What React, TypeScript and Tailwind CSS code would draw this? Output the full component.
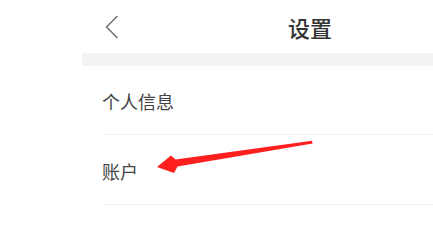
import React from "react";

const font = { fontFamily: '"Noto Sans CJK SC", "Noto Sans", sans-serif' };

function Row({ label, tall }: { label: string; tall?: boolean }) {
  return (
    <div className={`${tall ? "h-[70px]" : "h-[69px]"} flex items-center pt-[2px] border-b border-[#f0f0f0]`}>
      <span className="text-[18px] leading-none text-[#444]">{label}</span>
    </div>
  );
}

export default function App() {
  return (
    <div className="relative w-[433px] h-[218px] bg-white overflow-hidden" style={font}>
      <div className="ml-[82px]">
        {/* header */}
        <div className="h-[53px] flex items-center">
          <svg width="14" height="24" viewBox="0 0 14 24" className="ml-[23px]" fill="none">
            <path d="M12.5 1 L1.5 12 L12.5 23" stroke="#707070" strokeWidth="1.5" />
          </svg>
          <h1 className="ml-[169px] text-[22px] leading-none text-[#333] font-medium">设置</h1>
        </div>
        <div className="h-[13px] bg-[#f3f3f3]" />
        <div className="pl-[20px]">
          <Row label="个人信息" />
          <Row label="账户" tall />
        </div>
      </div>

      {/* annotation arrow */}
      <svg className="absolute left-0 top-0 pointer-events-none" width="433" height="218" viewBox="0 0 433 218">
        <polygon
          points="157,167 171,155.5 175.5,159.5 312,140.8 312.6,143.6 177.5,166.5 174,173"
          fill="#ff1f1f"
        />
      </svg>
    </div>
  );
}
